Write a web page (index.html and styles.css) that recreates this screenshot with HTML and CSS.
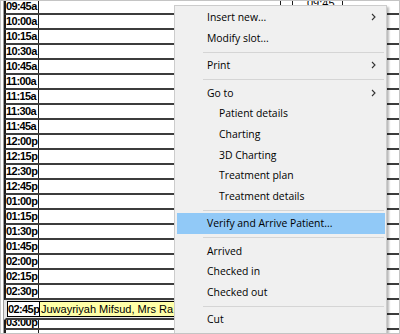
FILE: index.html
```html
<!DOCTYPE html>
<html lang="en">

<head>
    <meta charset="UTF-8" />
    <title>Appointment Book</title>
    <link rel="stylesheet" href="styles.css">
</head>

<body>
    <div class="screen">
        <div class="grid">
            <div class="pane-times">
                <div class="row"><div class="time">09:45a</div><div class="slot"></div></div>
                <div class="row"><div class="time">10:00a</div><div class="slot"></div></div>
                <div class="row"><div class="time">10:15a</div><div class="slot"></div></div>
                <div class="row"><div class="time">10:30a</div><div class="slot"></div></div>
                <div class="row"><div class="time">10:45a</div><div class="slot"></div></div>
                <div class="row"><div class="time">11:00a</div><div class="slot"></div></div>
                <div class="row"><div class="time">11:15a</div><div class="slot"></div></div>
                <div class="row"><div class="time">11:30a</div><div class="slot"></div></div>
                <div class="row"><div class="time">11:45a</div><div class="slot"></div></div>
                <div class="row"><div class="time">12:00p</div><div class="slot"></div></div>
                <div class="row"><div class="time">12:15p</div><div class="slot"></div></div>
                <div class="row"><div class="time">12:30p</div><div class="slot"></div></div>
                <div class="row"><div class="time">12:45p</div><div class="slot"></div></div>
                <div class="row"><div class="time">01:00p</div><div class="slot"></div></div>
                <div class="row"><div class="time">01:15p</div><div class="slot"></div></div>
                <div class="row"><div class="time">01:30p</div><div class="slot"></div></div>
                <div class="row"><div class="time">01:45p</div><div class="slot"></div></div>
                <div class="row"><div class="time">02:00p</div><div class="slot"></div></div>
                <div class="row"><div class="time">02:15p</div><div class="slot"></div></div>
                <div class="row"><div class="time">02:30p</div><div class="slot"></div></div>
                <div class="row row-current">
                    <div class="appt">
                        <div class="time">02:45p</div>
                        <div class="appt-name">Juwayriyah Mifsud, Mrs Ra</div>
                    </div>
                </div>
                <div class="row row-squash"><div class="time">03:00p</div><div class="slot"></div></div>
                <div class="row"><div class="time"></div><div class="slot"></div></div>
            </div>

            <div class="pane-day">
                <div class="day-row">
                    <div class="gap-a"></div>
                    <div class="gap-b"></div>
                    <div class="mini-slot">09:45</div>
                </div>
                <div class="day-row"></div>
                <div class="day-row"></div>
                <div class="day-row"></div>
                <div class="day-row"></div>
                <div class="day-row"></div>
                <div class="day-row"></div>
                <div class="day-row"></div>
                <div class="day-row"></div>
                <div class="day-row"></div>
                <div class="day-row"></div>
                <div class="day-row"></div>
                <div class="day-row"></div>
                <div class="day-row"></div>
                <div class="day-row"></div>
                <div class="day-row"></div>
                <div class="day-row"></div>
                <div class="day-row"></div>
                <div class="day-row"></div>
                <div class="day-row"></div>
                <div class="day-row"></div>
                <div class="day-row"></div>
                <div class="day-row"></div>
            </div>
        </div>

        <div class="menu">
            <div class="menu-item">Insert new...<svg class="arrow" width="5" height="8" viewBox="0 0 5 8"><path d="M1 1l3 3-3 3" /></svg></div>
            <div class="menu-item">Modify slot...</div>
            <div class="menu-sep"></div>
            <div class="menu-item">Print<svg class="arrow" width="5" height="8" viewBox="0 0 5 8"><path d="M1 1l3 3-3 3" /></svg></div>
            <div class="menu-sep"></div>
            <div class="menu-item">Go to<svg class="arrow" width="5" height="8" viewBox="0 0 5 8"><path d="M1 1l3 3-3 3" /></svg></div>
            <div class="menu-item sub">Patient details</div>
            <div class="menu-item sub">Charting</div>
            <div class="menu-item sub">3D Charting</div>
            <div class="menu-item sub">Treatment plan</div>
            <div class="menu-item sub">Treatment details</div>
            <div class="menu-sep"></div>
            <div class="menu-item active">Verify and Arrive Patient...</div>
            <div class="menu-sep"></div>
            <div class="menu-item">Arrived</div>
            <div class="menu-item">Checked in</div>
            <div class="menu-item">Checked out</div>
            <div class="menu-sep"></div>
            <div class="menu-item">Cut</div>
        </div>
    </div>
</body>

</html>
```

FILE: styles.css
```css
:root {
    --grid-line: #3c3c3c;
    --cell-line: #1c1c1c;
    --menu-bg: #f0f0f0;
    --menu-border: #cccccc;
    --menu-sep: #d5d5d5;
    --menu-hover: #91c9f7;
    --appt-bg: #ffffa8;
    --current-bg: #e6e6e6;
}

body {
    margin: 0;
    background: #ffffff;
}

.screen {
    position: relative;
    width: 400px;
    height: 334px;
    overflow: hidden;
    background: #ffffff;
}

.screen::after {
    content: "";
    position: absolute;
    inset: 0;
    border: 1px solid #c4c4c4;
    pointer-events: none;
}

.grid {
    display: flex;
    padding-left: 4px;
}

/* left pane: time column + first chair */
.pane-times {
    width: 171px;
    flex: none;
    box-shadow: -1px 0 0 #a0a0a0;
}

.row {
    display: flex;
    height: 13px;
    overflow: hidden;
    border-left: 2px solid var(--cell-line);
    border-bottom: 2px solid var(--grid-line);
}

.time {
    width: 32px;
    flex: none;
    border-right: 1px solid var(--cell-line);
    font-family: "Liberation Sans", Arial, sans-serif;
    font-weight: bold;
    font-size: 11px;
    line-height: 13px;
    letter-spacing: -0.6px;
    color: #000;
    white-space: nowrap;
    overflow: hidden;
}

.slot {
    flex: 1;
    background: #ffffff;
}

.row-current {
    height: 18px;
    background: var(--current-bg);
    border-left-color: var(--current-bg);
}

.appt {
    flex: 1;
    display: flex;
    height: 14px;
    margin: 1px 0 1px 1px;
    border: 1px solid #000;
}

.appt .time {
    width: 31px;
    line-height: 14px;
    background: #ffffff;
    border-right-color: #000;
}

.appt-name {
    flex: 1;
    padding-left: 1px;
    background: var(--appt-bg);
    font-family: "Liberation Sans", Arial, sans-serif;
    font-size: 11px;
    line-height: 14px;
    color: #000;
    white-space: nowrap;
    overflow: hidden;
}

.row-squash {
    height: 8px;
}

.row-squash .time {
    line-height: 4px;
}

/* right pane: next chair */
.pane-day {
    flex: 1;
}

.day-row {
    display: flex;
    height: 13px;
    overflow: hidden;
    border-bottom: 2px solid var(--grid-line);
}

.gap-a {
    width: 105px;
    border-right: 1px solid var(--cell-line);
}

.gap-b {
    width: 11px;
    border-right: 1px solid var(--cell-line);
}

.mini-slot {
    width: 35px;
    padding-left: 14px;
    border-right: 1px solid var(--cell-line);
    font-family: "Liberation Sans", Arial, sans-serif;
    font-size: 11px;
    line-height: 6px;
    color: #000;
}

/* context menu */
.menu {
    position: absolute;
    left: 174px;
    top: 5px;
    width: 208px;
    padding: 1px 1px 14px 2px;
    background: var(--menu-bg);
    border: 1px solid var(--menu-border);
    box-shadow: 2px 2px 2px rgba(0, 0, 0, 0.28);
    font-family: "Open Sans", "Noto Sans", sans-serif;
    font-size: 10.4px;
    color: #000;
}

.menu-item {
    display: flex;
    align-items: center;
    justify-content: space-between;
    height: 20.7px;
    padding: 0 9px 0 30px;
    white-space: nowrap;
}

.menu-item.sub {
    padding-left: 42px;
}

.menu-item.active {
    background: var(--menu-hover);
}

.arrow path {
    fill: none;
    stroke: #333;
    stroke-width: 1.1;
}

.menu-sep {
    height: 1px;
    margin: 3.3px 1px 2.3px 26px;
    background: var(--menu-sep);
}
```
